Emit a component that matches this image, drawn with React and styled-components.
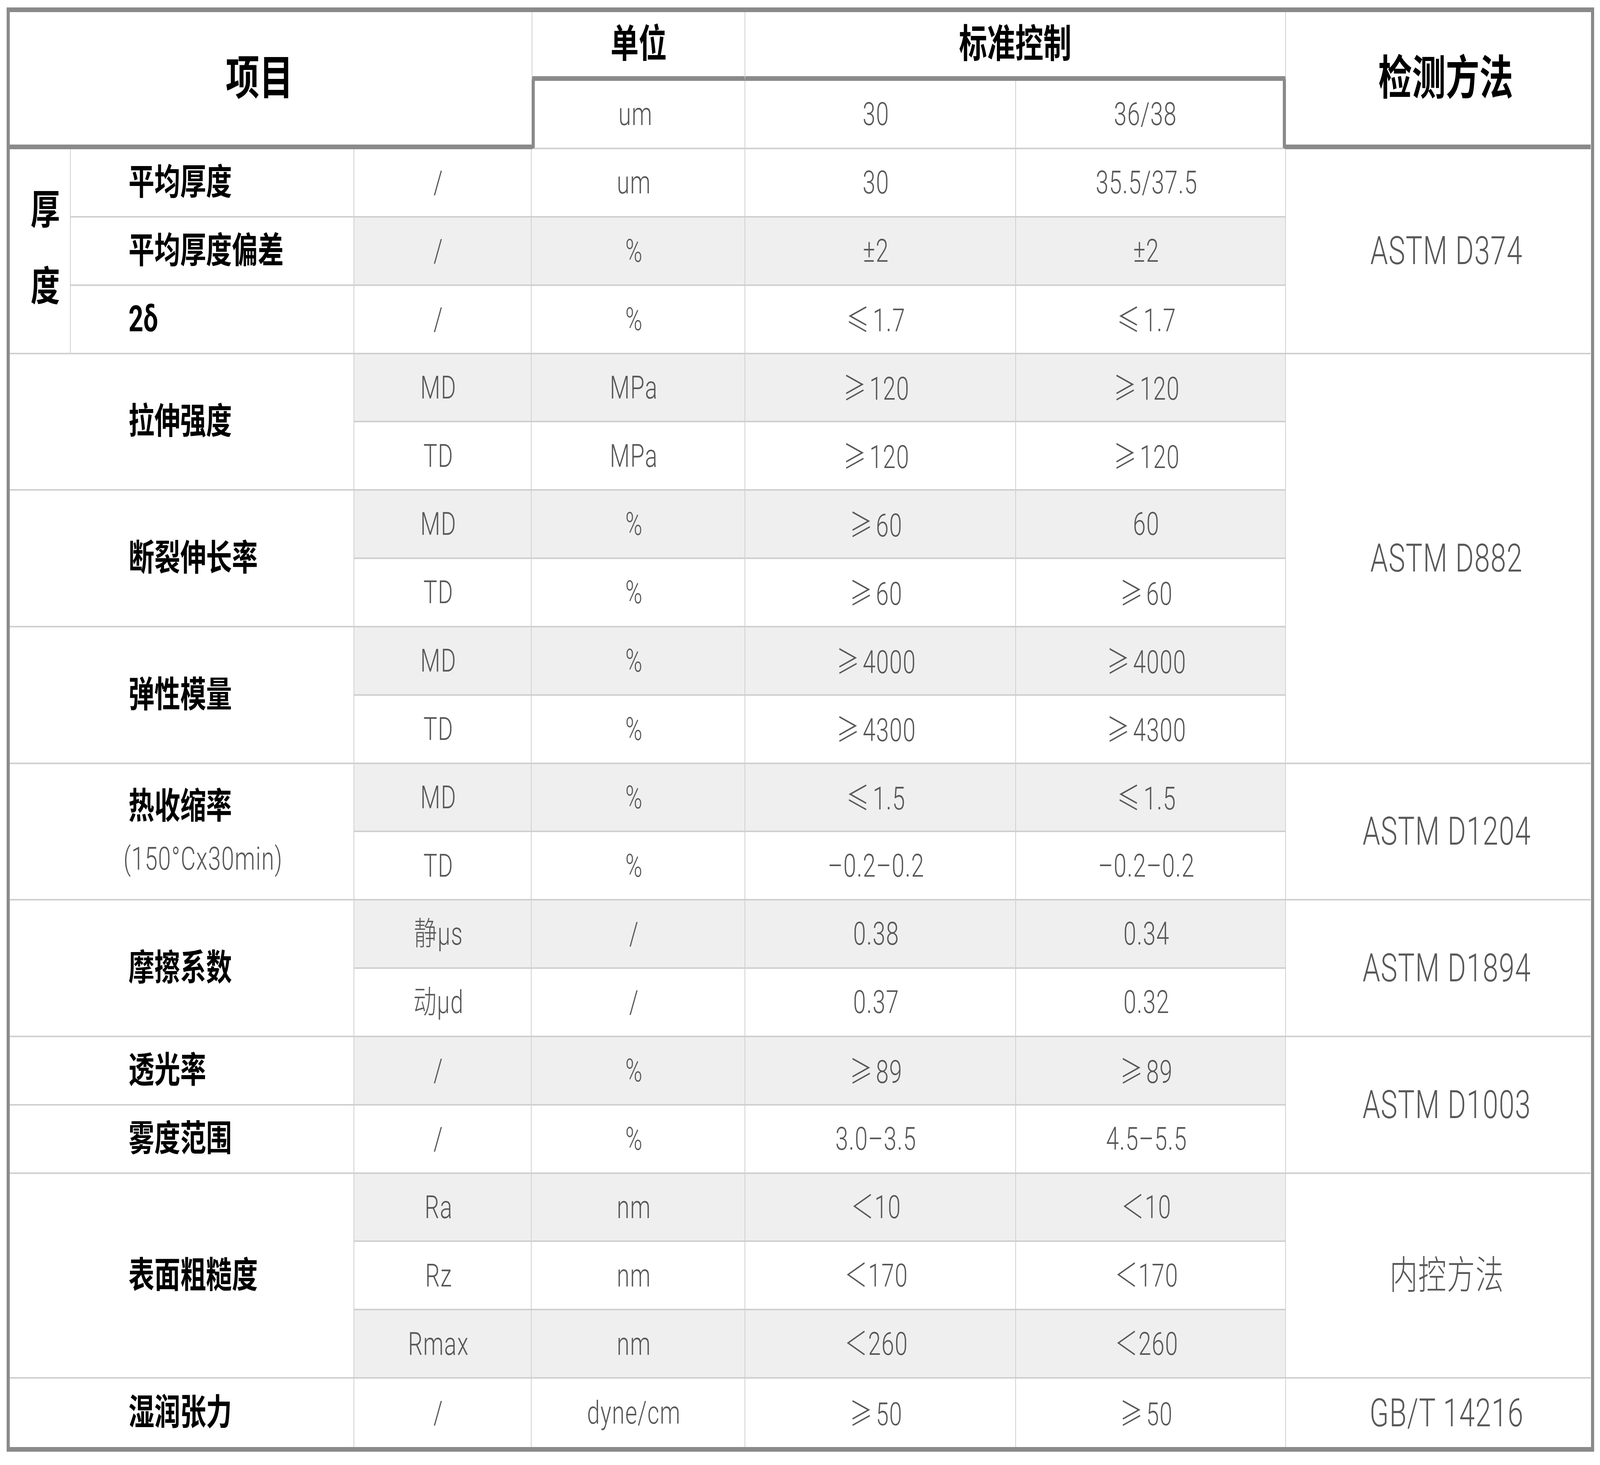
import React from "react";
import styled, { createGlobalStyle, css } from "styled-components";

// The page is photographed 4096px wide while the drawing is 5693px wide:
// horizontal measures are scaled, vertical ones are kept.
const SX = 4096 / 5693;
const x = (n) => `${(n * SX).toFixed(2)}px`;

const LINE = "#d0d0d0";
const DARK = "#8a8a8a";
const thinV = `${x(4)} solid ${LINE}`;
const thickV = `${x(12)} solid ${DARK}`;
const thinH = `4px solid ${LINE}`;
const thickH = `12px solid ${DARK}`;

const GlobalStyle = createGlobalStyle`
  html, body {
    margin: 0;
    padding: 0;
    background: #ffffff;
  }
  body {
    font-family: "Roboto", "Noto Sans CJK SC", sans-serif;
  }
`;

const squeeze = css`
  display: inline-block;
  transform: scaleX(${SX});
  transform-origin: ${({ $anchor }) => $anchor || "center"} center;
`;

const Sheet = styled.div`
  box-sizing: border-box;
  display: grid;
  grid-template-columns: ${[218, 1009, 631, 760, 963, 961, 1083].map(x).join(" ")};
  grid-template-rows: 176px 175px repeat(19, 1fr);
  width: ${x(5649)};
  height: 3697px;
  margin: 19px 0 0 ${x(23)};
  border-left: ${thickV};
  border-right: ${thickV};
  border-top: ${thickH};
  border-bottom: ${thickH};
  background: #ffffff;
`;

const Cell = styled.div`
  box-sizing: border-box;
  min-width: 0;
  display: flex;
  flex-direction: column;
  align-items: ${({ $left }) => ($left ? "flex-start" : "center")};
  justify-content: center;
  grid-column: ${({ $col }) => $col};
  grid-row: ${({ $row }) => $row};
  background: ${({ $shade }) => ($shade ? "#efefef" : "#ffffff")};
  border-left: ${({ $bl }) => $bl || "none"};
  border-right: ${({ $br }) => $br || "none"};
  border-bottom: ${({ $bb }) => $bb || "none"};
  padding-left: ${({ $pl }) => x($pl || 0)};
  padding-right: ${({ $pr }) => x($pr || 0)};
`;

const HeadText = styled.span`
  ${squeeze};
  font-family: "Roboto", "Noto Sans CJK SC", sans-serif;
  font-weight: 700;
  font-size: ${({ $size }) => $size}px;
  line-height: 1.2;
  color: #000000;
  white-space: nowrap;
`;

const Label = styled.span`
  ${squeeze};
  font-family: "Roboto", "Noto Sans CJK SC", sans-serif;
  font-weight: 700;
  font-size: 92px;
  line-height: 1.2;
  color: #000000;
  white-space: nowrap;
`;

const Stacked = styled.span`
  ${squeeze};
  font-family: "Noto Sans CJK SC", sans-serif;
  font-weight: 700;
  font-size: 104px;
  line-height: 196px;
  color: #000000;
  text-align: center;
  padding-bottom: 30px;
`;

const Value = styled.span`
  ${squeeze};
  font-family: "Roboto", "Noto Sans CJK SC", "DejaVu Sans", sans-serif;
  font-weight: 300;
  font-size: ${({ $size }) => $size || 82}px;
  letter-spacing: 2px;
  line-height: 1.2;
  color: #585858;
  white-space: nowrap;
`;

const Note = styled(Value)`
  margin-left: ${x(-18)};
  margin-top: 30px;
`;

const Sym = styled.span`
  font-family: "Noto Sans CJK SC", "DejaVu Sans", sans-serif;
  font-weight: 300;
  margin-right: 10px;
`;

const withSymbols = (text) =>
  text.split(/([≥≤])/).map((part, i) =>
    part === "≥" || part === "≤" ? <Sym key={i}>{part}</Sym> : part
  );

// sub, unit, 30, 36/38
const rows = [
  ["/", "um", "30", "35.5/37.5"],
  ["/", "%", "±2", "±2"],
  ["/", "%", "≤1.7", "≤1.7"],
  ["MD", "MPa", "≥120", "≥120"],
  ["TD", "MPa", "≥120", "≥120"],
  ["MD", "%", "≥60", "60"],
  ["TD", "%", "≥60", "≥60"],
  ["MD", "%", "≥4000", "≥4000"],
  ["TD", "%", "≥4300", "≥4300"],
  ["MD", "%", "≤1.5", "≤1.5"],
  ["TD", "%", "–0.2–0.2", "–0.2–0.2"],
  ["静μs", "/", "0.38", "0.34"],
  ["动μd", "/", "0.37", "0.32"],
  ["/", "%", "≥89", "≥89"],
  ["/", "%", "3.0–3.5", "4.5–5.5"],
  ["Ra", "nm", "＜10", "＜10"],
  ["Rz", "nm", "＜170", "＜170"],
  ["Rmax", "nm", "＜260", "＜260"],
  ["/", "dyne/cm", "≥50", "≥50"],
];

const items = [
  { from: 1, to: 1, text: "平均厚度", inGroup: true },
  { from: 2, to: 2, text: "平均厚度偏差", inGroup: true },
  { from: 3, to: 3, text: "2δ", inGroup: true },
  { from: 4, to: 5, text: "拉伸强度" },
  { from: 6, to: 7, text: "断裂伸长率" },
  { from: 8, to: 9, text: "弹性模量" },
  { from: 10, to: 11, text: "热收缩率", note: "(150°Cx30min)" },
  { from: 12, to: 13, text: "摩擦系数" },
  { from: 14, to: 14, text: "透光率" },
  { from: 15, to: 15, text: "雾度范围" },
  { from: 16, to: 18, text: "表面粗糙度" },
  { from: 19, to: 19, text: "湿润张力" },
];

const methods = [
  { from: 1, to: 3, text: "ASTM D374" },
  { from: 4, to: 9, text: "ASTM D882" },
  { from: 10, to: 11, text: "ASTM D1204" },
  { from: 12, to: 13, text: "ASTM D1894" },
  { from: 14, to: 15, text: "ASTM D1003" },
  { from: 16, to: 18, text: "内控方法" },
  { from: 19, to: 19, text: "GB/T 14216" },
];

const LAST = rows.length;
const span = (from, to) => `${from + 2} / ${to + 3}`;

const App = () => {
  return (
    <>
      <GlobalStyle />
      <Sheet>
        <Cell $col="1 / 4" $row="1 / 3" $bb={thickH} $pr={80}>
          <HeadText $size={120}>项目</HeadText>
        </Cell>
        <Cell $col="4" $row="1" $bl={thinV} $br={thinV} $bb={thickH}>
          <HeadText $size={100}>单位</HeadText>
        </Cell>
        <Cell $col="5 / 7" $row="1" $br={thinV} $bb={thickH}>
          <HeadText $size={100}>标准控制</HeadText>
        </Cell>
        <Cell $col="7" $row="1 / 3" $bb={thickH} $pl={54}>
          <HeadText $size={120}>检测方法</HeadText>
        </Cell>
        <Cell $col="4" $row="2" $bl={thickV} $br={thinV} $bb={thinH} $pr={30}>
          <Value>um</Value>
        </Cell>
        <Cell $col="5" $row="2" $br={thinV} $bb={thinH} $pr={30}>
          <Value>30</Value>
        </Cell>
        <Cell $col="6" $row="2" $br={thickV} $bb={thinH} $pr={30}>
          <Value>36/38</Value>
        </Cell>

        <Cell $col="1" $row={span(1, 3)} $br={thinV} $bb={thinH} $pl={38}>
          <Stacked>
            厚<br />度
          </Stacked>
        </Cell>

        {items.map((it) => (
          <Cell
            key={it.text}
            $left
            $col={it.inGroup ? "2" : "1 / 3"}
            $row={span(it.from, it.to)}
            $pl={it.inGroup ? 205 : 423}
            $br={thinV}
            $bb={it.to === LAST ? null : thinH}
          >
            <Label $anchor="left">{it.text}</Label>
            {it.note && <Note $anchor="left">{it.note}</Note>}
          </Cell>
        ))}

        {rows.map((r, i) =>
          r.map((v, j) => (
            <Cell
              key={`${i}-${j}`}
              $col={String(j + 3)}
              $row={String(i + 3)}
              $shade={i % 2 === 1}
              $br={thinV}
              $bb={i === LAST - 1 ? null : thinH}
              $pr={30}
            >
              <Value>{withSymbols(v)}</Value>
            </Cell>
          ))
        )}

        {methods.map((m) => (
          <Cell
            key={m.text}
            $col="7"
            $row={span(m.from, m.to)}
            $pl={60}
            $bb={m.to === LAST ? null : thinH}
          >
            <Value $size={100}>{m.text}</Value>
          </Cell>
        ))}
      </Sheet>
    </>
  );
};

export default App;
